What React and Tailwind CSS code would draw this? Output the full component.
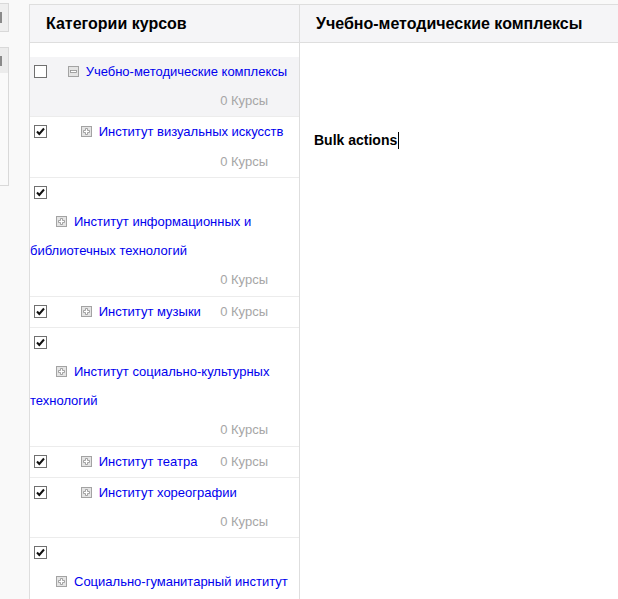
import React from "react";

const font = { fontFamily: '"Liberation Sans", Arial, sans-serif' };

const rows = [
  { title: "Учебно-методические комплексы", checked: false, open: true, indent: "ml-[13px]", selected: true },
  { title: "Институт визуальных искусств", checked: true, indent: "ml-[26px]" },
  { title: "Институт информационных и библиотечных технологий", checked: true, indent: "ml-[26px]", wrap: true },
  { title: "Институт музыки", checked: true, indent: "ml-[26px]", inline: true },
  { title: "Институт социально-культурных технологий", checked: true, indent: "ml-[26px]", wrap: true },
  { title: "Институт театра", checked: true, indent: "ml-[26px]", inline: true },
  { title: "Институт хореографии", checked: true, indent: "ml-[26px]" },
  { title: "Социально-гуманитарный институт", checked: true, indent: "ml-[26px]", wrap: true },
];

function Checkbox({ checked }) {
  return (
    <span className="inline-block align-[-2px] w-[13px] h-[13px] ml-[4px] mr-[4px] border border-[#707070] bg-white relative">
      {checked && (
        <svg viewBox="0 0 11 11" className="absolute left-0 top-0 w-[11px] h-[11px]">
          <path d="M2 5.5 L4.3 8 L9 2.5" fill="none" stroke="#111" strokeWidth="2" />
        </svg>
      )}
    </span>
  );
}

function Toggle({ open }) {
  return (
    <svg viewBox="0 0 11 11" className="inline-block w-[11px] h-[11px] mr-[7px] align-[-1px]">
      <rect x="0.5" y="0.5" width="10" height="10" fill="#e4e4e4" stroke="#a3a3a3" />
      {open ? (
        <rect x="2.5" y="4.5" width="6" height="2" fill="#fff" stroke="#8f8f8f" strokeWidth="0.8" />
      ) : (
        <path d="M4.5 2.5h2v2h2v2h-2v2h-2v-2h-2v-2h2z" fill="#fff" stroke="#8f8f8f" strokeWidth="0.8" />
      )}
    </svg>
  );
}

function Count({ float }) {
  return float ? (
    <span className="float-right mr-[31px] text-[#a6a6a6]">0 Курсы</span>
  ) : (
    <div className="text-right pr-[31px] text-[#a6a6a6]">0 Курсы</div>
  );
}

function Row({ row }) {
  return (
    <div className={`border-b border-[#ececec] pb-[1px] ${row.selected ? "bg-[#f4f4f6]" : ""}`}>
      {row.inline && <Count float />}
      <Checkbox checked={row.checked} />{" "}
      {row.wrap && <br />}
      <span className={row.indent}>
        <Toggle open={row.open} />
        <a className="text-[#0000ee]">{row.title}</a>
      </span>
      {!row.inline && <Count />}
    </div>
  );
}

export default function App() {
  return (
    <div className="w-[618px] h-[599px] overflow-hidden bg-[#f9f9f9] flex" style={font}>
      <div className="w-[29px] shrink-0 pt-[3px]">
        <div className="w-[9px] h-[29px] border border-l-0 border-[#d9d9d9] bg-[#efefef] flex items-center">
          <span className="w-[2px] h-[11px] bg-[#8a8a8a]" />
        </div>
        <div className="w-[9px] h-[139px] mt-[15px] border border-l-0 border-[#d9d9d9] bg-[#fafafa]">
          <div className="h-[25px] bg-[#ececec] flex items-center">
            <span className="w-[2px] h-[10px] bg-[#8a8a8a]" />
          </div>
        </div>
      </div>
      <div className="flex-1 mt-[4px] border-l border-t border-[#dedede] bg-white grid grid-cols-[270px_1fr] grid-rows-[38px_1fr]">
        <div className="bg-[#f5f5f7] border-b border-r border-[#dedede] pl-[16px] flex items-center text-[16px] font-bold text-black">
          Категории курсов
        </div>
        <div className="bg-[#f5f5f7] border-b border-[#dedede] pl-[16px] flex items-center text-[16px] font-bold text-black whitespace-nowrap">
          Учебно-методические комплексы
        </div>
        <div className="border-r border-[#dedede] pt-[14px] text-[13px] leading-[29.2px] overflow-hidden">
          {rows.map((r) => (
            <Row key={r.title} row={r} />
          ))}
        </div>
        <div className="pl-[14px] pt-[87px]">
          <div className="flex items-center text-[14px] font-bold text-black">
            Bulk actions
            <span className="inline-block w-[1px] h-[17px] bg-black ml-[1px]" />
          </div>
        </div>
      </div>
    </div>
  );
}
